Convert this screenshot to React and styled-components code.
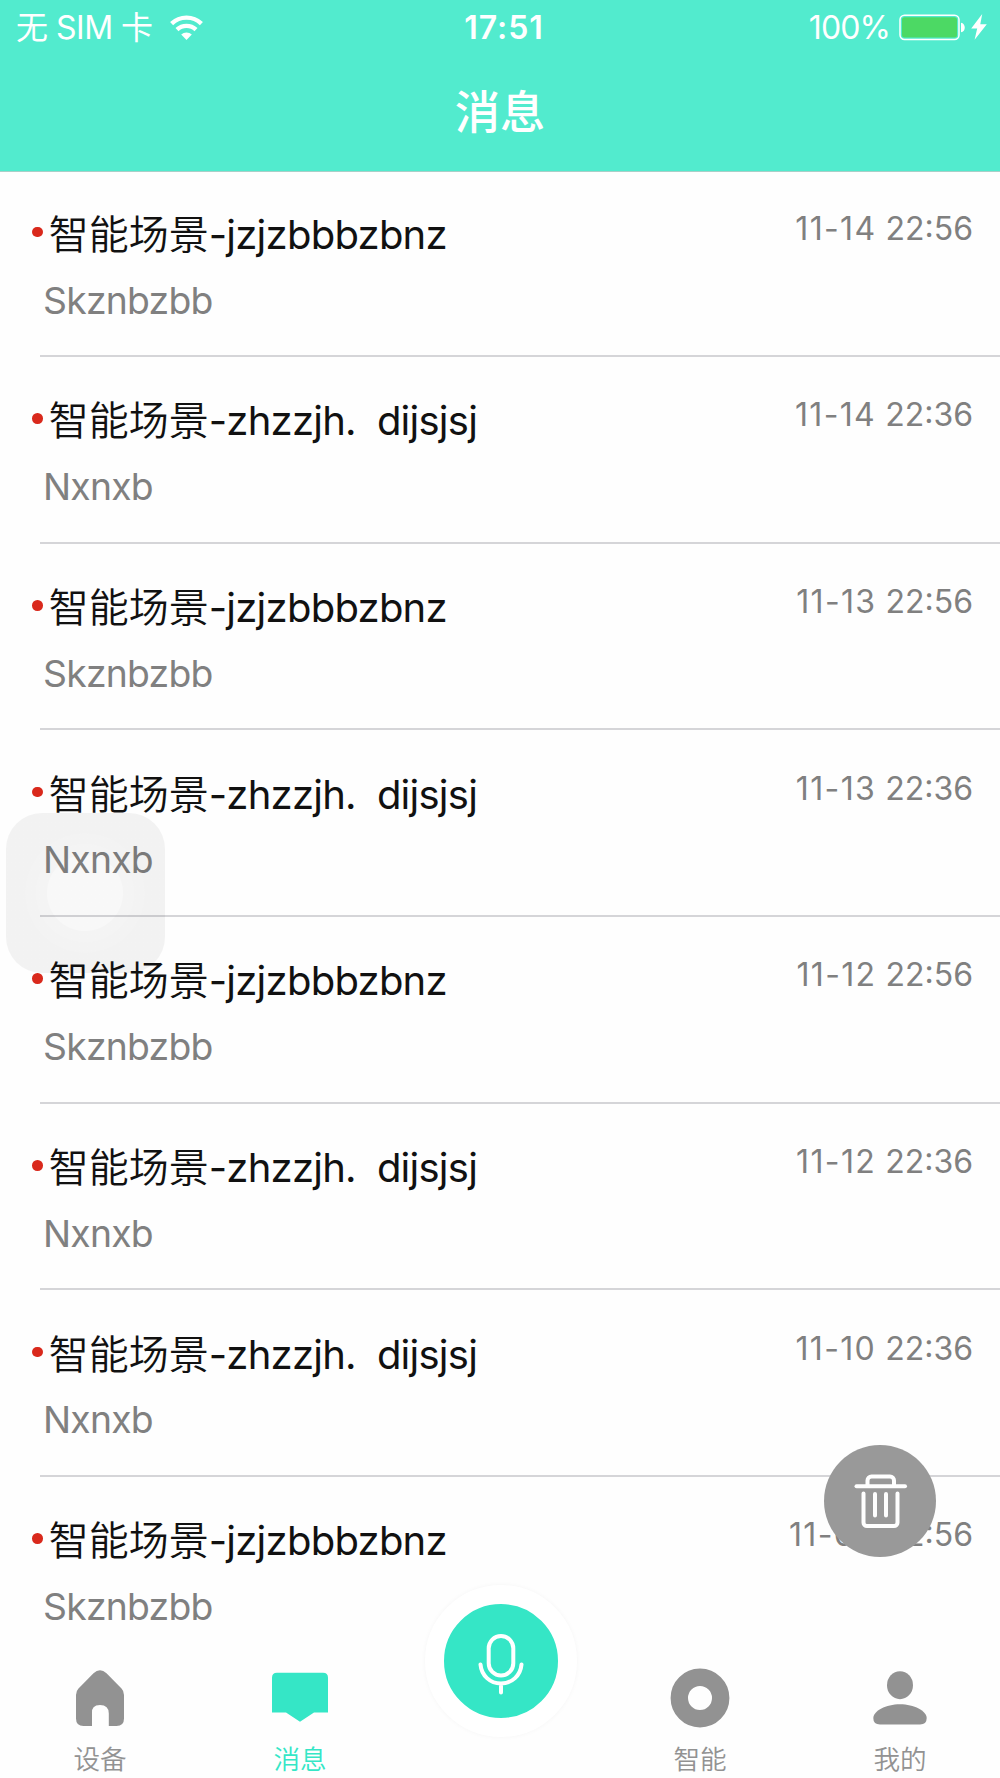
import React from "react";
import styled, { createGlobalStyle } from "styled-components";

const GlobalStyle = createGlobalStyle`
  * {
    box-sizing: border-box;
  }

  body {
    margin: 0;
    font-family: Inter, "Noto Sans CJK SC", sans-serif;
  }
`;

const Screen = styled.div`
  background-color: #fefefe;
  display: flex;
  flex-direction: column;
  height: 1778px;
  overflow: hidden;
  position: relative;
  width: 1000px;
`;

const Header = styled.header`
  background-color: #52ebce;
  border-bottom: 1px solid #a9cfc8;
  color: white;
  flex: none;
  height: 172px;
`;

const StatusBar = styled.div`
  align-items: center;
  display: grid;
  font-size: 32px;
  grid-template-columns: 1fr auto 1fr;
  height: 56px;
  line-height: 56px;
  padding: 0 13px 0 16px;
`;

const Carrier = styled.div`
  align-items: center;
  display: flex;
  gap: 17px;
  letter-spacing: -0.5px;
  white-space: pre;
`;

const Clock = styled.div`
  font-weight: 600;
  letter-spacing: 1px;
  padding-left: 5px;
`;

const Power = styled.div`
  align-items: center;
  display: flex;
  justify-content: flex-end;
  letter-spacing: -0.9px;
`;

const BatteryIcon = styled.svg`
  margin: 0 5px 2px 9px;
`;

const BoltIcon = styled.svg`
  margin-bottom: 2px;
`;

const Title = styled.h1`
  font-size: 45.3px;
  font-weight: 500;
  line-height: 60px;
  margin: 27px 0 0;
  text-align: center;
`;

const List = styled.main`
  flex: 1;
  margin-top: -1.7px;
  min-height: 0;
  overflow: hidden;
`;

const Row = styled.div`
  display: flex;
  flex-direction: column;
  height: 186.67px;
  padding-top: 39.4px;
`;

const RowTop = styled.div`
  align-items: flex-start;
  display: flex;
  height: 67.8px;
  padding: 0 27px 0 32px;
`;

const Dot = styled.span`
  background-color: #d9291c;
  border-radius: 50%;
  flex: none;
  height: 10.7px;
  margin: 17px 6px 0 0;
  width: 10.7px;
`;

const Name = styled.div`
  color: #111;
  flex: 1;
  font-size: 40px;
  font-weight: 350;
  line-height: 50px;
  white-space: pre;
`;

const Latin = styled.span`
  font-weight: 400;
  letter-spacing: -0.75px;
`;

const Time = styled.div`
  color: #808080;
  font-size: 32px;
  line-height: 38px;
`;

const Day = styled.span`
  letter-spacing: 1.35px;
`;

const Preview = styled.div`
  color: #808080;
  flex: 1;
  font-size: 37.3px;
  letter-spacing: -0.75px;
  line-height: 45px;
  padding-left: 43px;
`;

const Divider = styled.div`
  background-color: #d5d5d8;
  height: 2px;
  margin-left: 40px;
`;

const TouchPad = styled.div`
  background: radial-gradient(
    circle at 79px 80px,
    rgba(0, 0, 0, 0.025) 37.5px,
    rgba(0, 0, 0, 0.039) 38.5px,
    rgba(0, 0, 0, 0.039) 48.5px,
    rgba(0, 0, 0, 0.043) 49.5px,
    rgba(0, 0, 0, 0.043) 59px,
    rgba(0, 0, 0, 0.046) 60px
  );
  border-radius: 36px;
  height: 160px;
  left: 6px;
  position: absolute;
  top: 813px;
  width: 159px;
`;

const DeleteButton = styled.button`
  background-color: #999;
  border: none;
  border-radius: 50%;
  height: 112px;
  left: 824px;
  padding: 0;
  position: absolute;
  top: 1445px;
  width: 112px;
`;

const TabBar = styled.nav`
  background-color: #fefefe;
  display: grid;
  flex: none;
  grid-template-columns: repeat(5, 1fr);
  height: 131px;
`;

const Tab = styled.div`
  align-items: center;
  color: ${props => (props.$active ? "#35e6c6" : "#929292")};
  display: flex;
  flex-direction: column;
  font-size: 26.6px;
  font-weight: 350;
  line-height: 32px;
  padding-top: 20px;
`;

const TabIcon = styled.svg`
  display: block;
  fill: currentColor;
  flex: none;
  height: 62px;
  margin-bottom: 14px;
  width: 62px;
`;

const MicSlot = styled.div`
  display: flex;
  justify-content: center;
  padding-left: 1px;
`;

const MicButton = styled.button`
  background-color: #35e6c6;
  border: 19px solid #fff;
  border-radius: 50%;
  box-shadow: 0 0 5px rgba(0, 0, 0, 0.04);
  flex: none;
  height: 152px;
  margin-top: -62px;
  padding: 0;
  position: relative;
  width: 152px;
`;

const messages = [
  { name: "jzjzbbbzbnz", day: "11-14", hour: "22:56", text: "Skznbzbb" },
  { name: "zhzzjh.  dijsjsj", day: "11-14", hour: "22:36", text: "Nxnxb" },
  { name: "jzjzbbbzbnz", day: "11-13", hour: "22:56", text: "Skznbzbb" },
  { name: "zhzzjh.  dijsjsj", day: "11-13", hour: "22:36", text: "Nxnxb" },
  { name: "jzjzbbbzbnz", day: "11-12", hour: "22:56", text: "Skznbzbb" },
  { name: "zhzzjh.  dijsjsj", day: "11-12", hour: "22:36", text: "Nxnxb" },
  { name: "zhzzjh.  dijsjsj", day: "11-10", hour: "22:36", text: "Nxnxb" },
  { name: "jzjzbbbzbnz", day: "11-09", hour: "22:56", text: "Skznbzbb" }
];

const Message = ({ name, day, hour, text }) => (
  <Row>
    <RowTop>
      <Dot />
      <Name>
        智能场景<Latin>-{name}</Latin>
      </Name>
      <Time>
        <Day>{day}</Day> {hour}
      </Time>
    </RowTop>
    <Preview>{text}</Preview>
    <Divider />
  </Row>
);

const Wifi = () => (
  <svg width="33" height="26" viewBox="0 0 33 26">
    <g fill="none" stroke="white" strokeWidth="4.4">
      <path d="M1.6 8.6A21.5 21.5 0 0 1 31.4 8.6" />
      <path d="M7 14.7A13.8 13.8 0 0 1 26 14.7" />
    </g>
    <path d="M11.2 19.6a7.8 7.8 0 0 1 10.6 0L16.5 25z" fill="white" />
  </svg>
);

const Battery = () => (
  <BatteryIcon width="67" height="27" viewBox="0 0 67 27">
    <rect x="1" y="1.2" width="59" height="24.4" rx="4.5" fill="none" stroke="white" strokeWidth="1.5" />
    <rect x="3" y="3.2" width="55" height="20.4" rx="2.5" fill="#4cd964" />
    <path d="M62 8.7c5 .6 5 9 0 9.600z" fill="white" />
  </BatteryIcon>
);

const Bolt = () => (
  <BoltIcon width="16" height="26" viewBox="0 0 16 26">
    <path d="M11.200 0L.2 14.600h6L3.600 25.800 15.800 10.300H9.300z" fill="white" />
  </BoltIcon>
);

const Trash = () => (
  <svg width="112" height="112" viewBox="0 0 112 112">
    <g fill="none" stroke="white" strokeWidth="4" strokeLinecap="round">
      <path d="M32.500 41.300h48.500" />
      <path d="M43.500 40v-4.500a4 4 0 0 1 4-4h18.500a4 4 0 0 1 4 4V40" />
      <path d="M39.500 48.500v29a3.500 3.500 0 0 0 3.500 3.500h27a3.500 3.500 0 0 0 3.500-3.500v-29" />
      <path d="M51 49v21.500M62 49v21.500" />
    </g>
  </svg>
);

const Mic = () => (
  <svg width="114" height="114" viewBox="0 0 114 114">
    <g fill="none" stroke="white" strokeWidth="4" strokeLinecap="round">
      <rect x="44.700" y="32" width="24.600" height="39.500" rx="12.300" />
      <path d="M36.500 60.500c1 11 9.500 19 20.500 19s19.500-8 20.500-19M57 79.500v9" />
    </g>
  </svg>
);

const App = () => (
  <Screen>
    <GlobalStyle />
    <Header>
      <StatusBar>
        <Carrier>
          无 SIM 卡
          <Wifi />
        </Carrier>
        <Clock>17:51</Clock>
        <Power>
          100%
          <Battery />
          <Bolt />
        </Power>
      </StatusBar>
      <Title>消息</Title>
    </Header>
    <List>
      {messages.map(message => (
        <Message key={message.day + message.hour} {...message} />
      ))}
    </List>
    <TabBar>
      <Tab>
        <TabIcon viewBox="0 0 62 62">
          <path d="M24.500 6.200Q31 .4 37.500 6.200L52.500 21.500Q55 24 55 28V51.500Q55 59 47.500 59H39.800V46.500Q39.800 38 31 38T23 46.500V59H14.500Q7 59 7 51.500V28Q7 24 9.500 21.500z" />
        </TabIcon>
        设备
      </Tab>
      <Tab $active>
        <TabIcon viewBox="0 0 62 62">
          <path d="M8 5.700h46q5 0 5 5V45.500H45L31 54.700 17 45.500H3V10.700q0-5 5-5z" />
        </TabIcon>
        消息
      </Tab>
      <MicSlot>
        <MicButton>
          <Mic />
        </MicButton>
      </MicSlot>
      <Tab>
        <TabIcon viewBox="0 0 62 62">
          <circle cx="31" cy="31" r="20.700" fill="none" stroke="currentColor" strokeWidth="17.400" />
        </TabIcon>
        智能
      </Tab>
      <Tab>
        <TabIcon viewBox="0 0 62 62">
          <ellipse cx="31" cy="18.200" rx="13" ry="14" />
          <path d="M11 57.500Q4.300 57.500 4.300 51C4.300 44 17 37.200 31 37.200S57.700 44 57.700 51Q57.700 57.500 51 57.500z" />
        </TabIcon>
        我的
      </Tab>
    </TabBar>
    <TouchPad />
    <DeleteButton>
      <Trash />
    </DeleteButton>
  </Screen>
);

export default App;
